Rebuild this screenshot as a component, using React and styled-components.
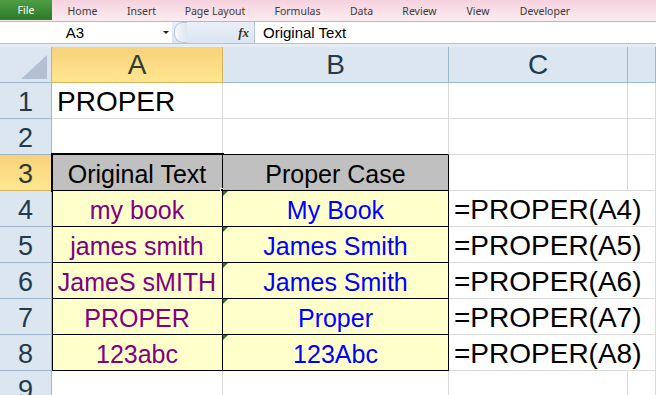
import React from 'react'
import styled, { createGlobalStyle } from 'styled-components'

const GlobalStyle = createGlobalStyle`
    body {
        margin: 0;
        background: #fff;
        font-family: "Liberation Sans", Arial, sans-serif;
        overflow: hidden;
    }
`;

const Window = styled.div`
    width: 656px;
    height: 395px;
    overflow: hidden;
    display: flex;
    flex-direction: column;
    background: #fff;
`;

const TabBar = styled.div`
    display: flex;
    height: 21px;
    flex: 0 0 21px;
    background: linear-gradient(#f5d2de, #fcecf2);
    border-bottom: 1px solid #a9bbd1;
    font-family: "Noto Sans", "DejaVu Sans", sans-serif;
    font-size: 10.5px;
`;

const FileTab = styled.div`
    width: 52px;
    height: 20px;
    display: flex;
    align-items: center;
    justify-content: center;
    color: #fff;
    background: linear-gradient(#4f9d44, #2a7a2a);
`;

const Tab = styled.div`
    width: ${props => props.$w}px;
    display: flex;
    align-items: center;
    justify-content: center;
    color: #3a3a3a;
`;

const FormulaBar = styled.div`
    display: flex;
    height: 21px;
    flex: 0 0 21px;
    border-bottom: 1px solid #b4c4d8;
    font-size: 15px;
`;

const NameBox = styled.div`
    width: 172px;
    display: flex;
    align-items: center;
    background: #fff;
`;

const NameText = styled.span`
    width: 150px;
    text-align: center;
`;

const DropArrow = styled.span`
    margin-left: 13px;
    width: 0;
    height: 0;
    border-left: 3px solid transparent;
    border-right: 3px solid transparent;
    border-top: 3px solid #222;
`;

const FxArea = styled.div`
    width: 82px;
    display: flex;
    align-items: center;
    justify-content: space-between;
    padding-right: 5px;
    box-sizing: border-box;
    background: linear-gradient(#e9eff7, #dbe5f1);
`;

const Splitter = styled.div`
    width: 12px;
    height: 19px;
    margin-left: 2px;
    border-radius: 9px 0 0 9px;
    border: 1px solid #b8c7d9;
    border-right: none;
    background: linear-gradient(90deg, #f6f8fb, #dfe6ef);
`;

const Fx = styled.span`
    font-family: "Liberation Serif", serif;
    font-style: italic;
    font-weight: bold;
    font-size: 13px;
    color: #333;
`;

const FormulaInput = styled.div`
    flex: 1;
    display: flex;
    align-items: center;
    padding-left: 8px;
    border-left: 1px solid #b4c4d8;
    background: #fff;
`;

const Spacer = styled.div`
    flex: 0 0 3px;
    background: #e6ecf4;
`;

const Sheet = styled.div`
    display: grid;
    grid-template-columns: 52px 171px 226px 179px 1fr;
    grid-auto-rows: 36px;
`;

const Corner = styled.div`
    box-sizing: border-box;
    position: relative;
    background: #dce6f1;
    border-right: 1px solid #9eb6ce;
    border-bottom: 1px solid #9eb6ce;
`;

const CornerMark = styled.svg`
    position: absolute;
    right: 4px;
    bottom: 3px;
`;

const ColHead = styled.div`
    box-sizing: border-box;
    display: flex;
    align-items: center;
    justify-content: center;
    font-size: 28px;
    color: ${props => (props.$active ? '#2f3b30' : '#233a4c')};
    background: ${props => (props.$active ? 'linear-gradient(#f8d27a, #ffe690)' : '#dce6f1')};
    border-right: 1px solid ${props => (props.$active ? '#d6b35a' : '#9eb6ce')};
    border-bottom: 1px solid ${props => (props.$active ? '#d6b35a' : '#9eb6ce')};
`;

const RowHead = styled(ColHead)`
    font-size: 27px;
    padding-top: 3px;
`;

const Cell = styled.div`
    box-sizing: border-box;
    position: relative;
    z-index: ${props => (props.$spill ? 1 : 0)};
    display: flex;
    align-items: center;
    justify-content: ${props => (props.$center ? 'center' : 'flex-start')};
    padding: ${props => (props.$size ? 4 : 2)}px 5px 0;
    white-space: nowrap;
    font-size: ${props => props.$size || 28}px;
    color: ${props => props.$color || '#000'};
    background: ${props => props.$fill || '#fff'};
    border-right: 1px solid ${props => props.$rb || '#d9d9d9'};
    border-bottom: 1px solid ${props => props.$bb || '#d9d9d9'};
    box-shadow: ${props => (props.$lb ? 'inset 1px 0 0 #000' : 'none')};

    ${props => props.$flag && `
        &::before {
            content: "";
            position: absolute;
            left: 0;
            top: 0;
            border-top: 5px solid #1d7f1d;
            border-right: 5px solid transparent;
        }
    `}

    ${props => props.$selected && `
        &::after {
            content: "";
            position: absolute;
            left: -1px;
            top: -2px;
            right: -2px;
            bottom: -2px;
            border: 2px solid #000;
        }
    `}
`;

const FillHandle = styled.span`
    position: absolute;
    right: -5px;
    bottom: -5px;
    width: 5px;
    height: 5px;
    background: #000;
    border: 1px solid #fff;
    z-index: 2;
`;

const tabs = [
    ['Home', 61], ['Insert', 57], ['Page Layout', 90], ['Formulas', 75],
    ['Data', 53], ['Review', 63], ['View', 54], ['Developer', 80],
];

const rows = [
    ['my book', 'My Book'],
    ['james smith', 'James Smith'],
    ['JameS sMITH', 'James Smith'],
    ['PROPER', 'Proper'],
    ['123abc', '123Abc'],
];

const YELLOW = '#ffffcc';

export default function App() {
    return (
        <Window>
            <GlobalStyle />
            <TabBar>
                <FileTab>File</FileTab>
                {tabs.map(([name, w]) => <Tab key={name} $w={w}>{name}</Tab>)}
            </TabBar>
            <FormulaBar>
                <NameBox>
                    <NameText>A3</NameText>
                    <DropArrow />
                </NameBox>
                <FxArea>
                    <Splitter />
                    <Fx>fx</Fx>
                </FxArea>
                <FormulaInput>Original Text</FormulaInput>
            </FormulaBar>
            <Spacer />
            <Sheet>
                <Corner>
                    <CornerMark width="26" height="24" viewBox="0 0 26 24">
                        <polygon points="26,0 26,24 0,24" fill="#b3c0d2" />
                    </CornerMark>
                </Corner>
                <ColHead $active>A</ColHead>
                <ColHead>B</ColHead>
                <ColHead>C</ColHead>
                <ColHead />

                <RowHead>1</RowHead>
                <Cell>PROPER</Cell>
                <Cell />
                <Cell />
                <Cell />

                <RowHead>2</RowHead>
                <Cell $bb="#000" />
                <Cell $bb="#000" />
                <Cell />
                <Cell />

                <RowHead $active>3</RowHead>
                <Cell $center $size={25} $fill="#c0c0c0" $rb="#000" $bb="#000" $lb $selected>
                    Original Text
                    <FillHandle />
                </Cell>
                <Cell $center $size={25} $fill="#c0c0c0" $rb="#000" $bb="#000">Proper Case</Cell>
                <Cell />
                <Cell />

                {rows.map(([orig, proper], i) => (
                    <React.Fragment key={i}>
                        <RowHead>{i + 4}</RowHead>
                        <Cell $center $size={25} $fill={YELLOW} $color="#800080" $rb="#000" $bb="#000" $lb>{orig}</Cell>
                        <Cell $center $size={25} $fill={YELLOW} $color="#0000ff" $rb="#000" $bb="#000" $flag>{proper}</Cell>
                        <Cell $spill $fill="transparent" $rb="transparent">=PROPER(A{i + 4})</Cell>
                        <Cell $fill="transparent" />
                    </React.Fragment>
                ))}

                <RowHead>9</RowHead>
                <Cell />
                <Cell />
                <Cell />
                <Cell />
            </Sheet>
        </Window>
    )
}
